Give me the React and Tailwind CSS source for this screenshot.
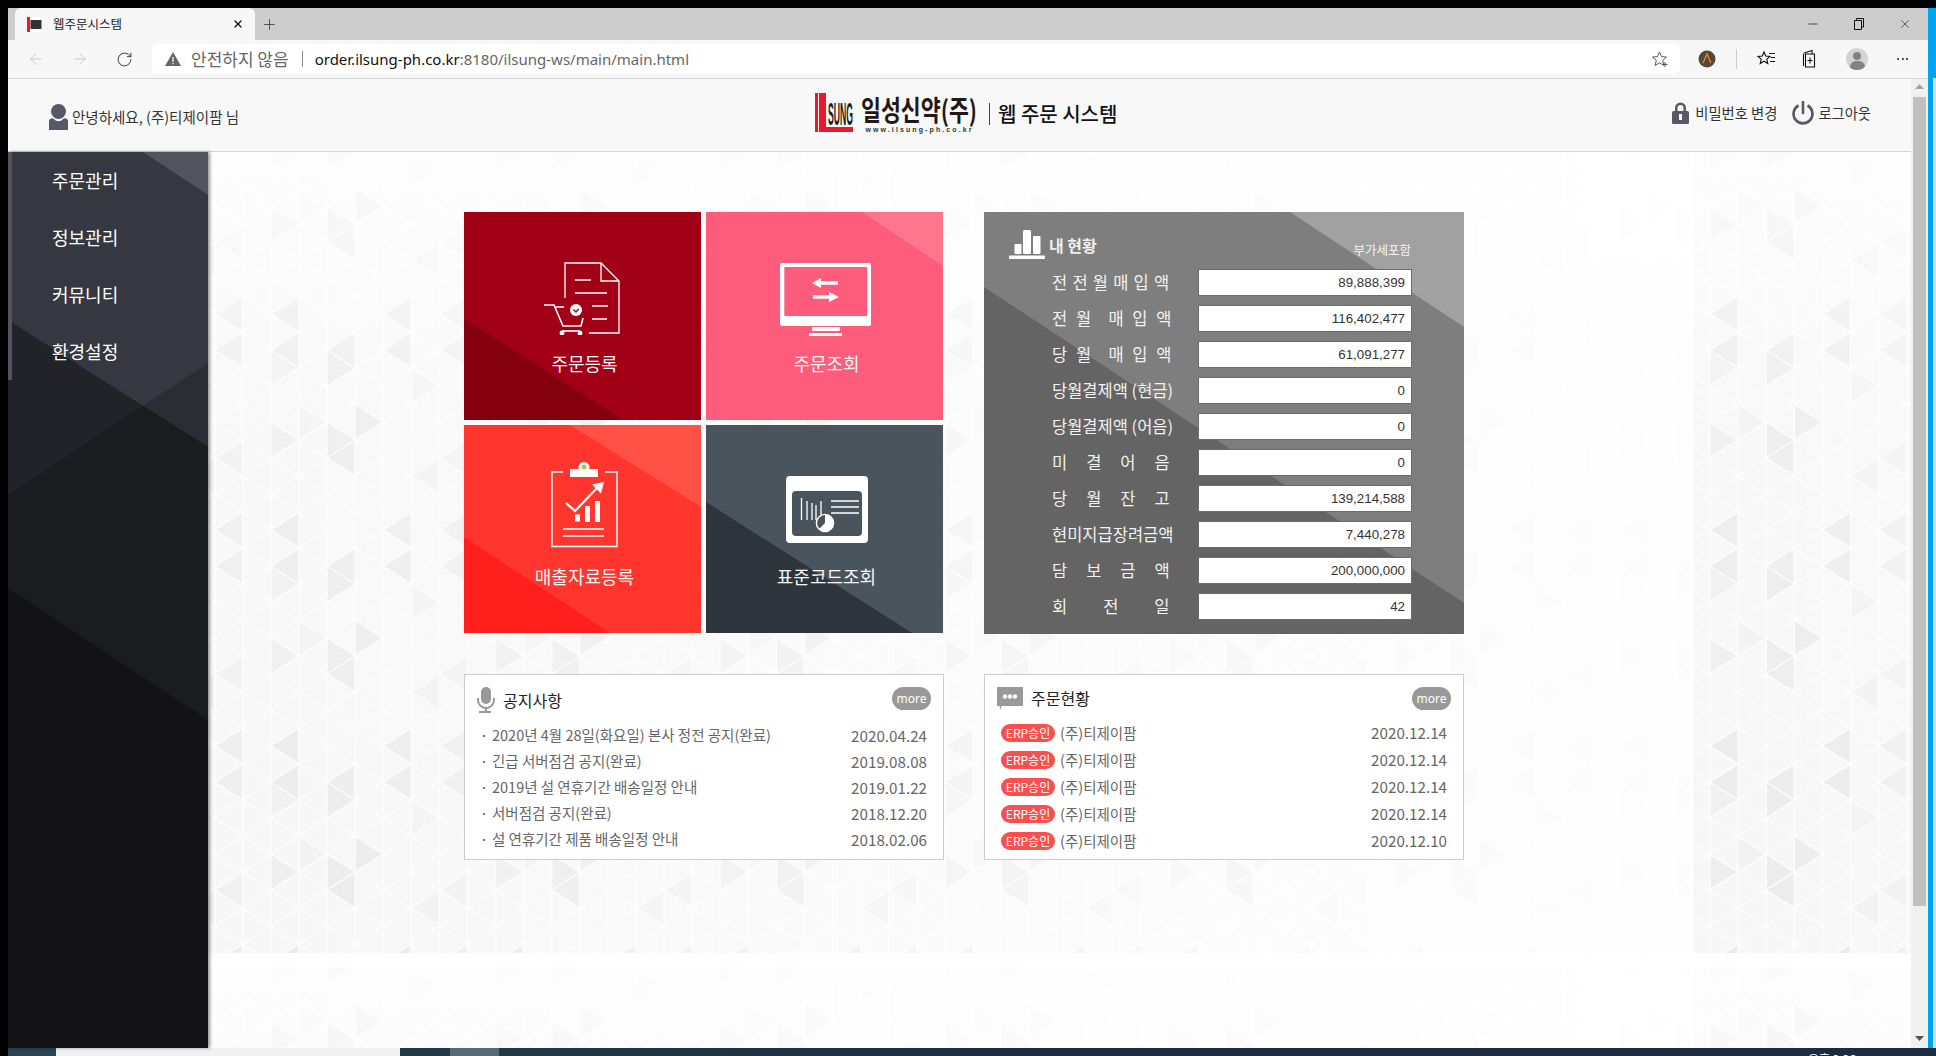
import React from "react";
import { ArrowLeft, ArrowRight, RotateCw, Plus, X, Minus } from "lucide-react";

const KR = "font-['Noto_Sans_CJK_KR','Noto_Sans',sans-serif]";

const GRAY = [
  [1, 18, 0, 36, 1], [1, 54, 0, 72, 1], [2, 72, 3, 90, 1], [3, 54, 2, 72, 1],
  [5, 18, 4, 36, 1], [5, 54, 4, 72, 1], [3, 126, 4, 144, 1], [2, 144, 3, 162, 1],
  [3, 162, 2, 180, 1], [0, 144, 1, 162, 0.7], [7, 18, 6, 36, 0.7], [7, 54, 6, 72, 0.7],
  [0, 72, 1, 90, 0.6], [7, 162, 6, 180, 0.5], [5, 90, 6, 108, 0.4], [1, 126, 2, 144, 0.4], [6, 180, 5, 198, 0.5],
];
const C = 28.09;

function Lattice({ id, ox, oy }) {
  const lines = [];
  for (let k = 0; k <= 8; k++) {
    const x = k * C;
    lines.push(<line key={"v" + k} x1={x} x2={x} y1={0} y2={216} />);
    for (let n = -1; n <= 6; n++) {
      const y = 36 * n + (k % 2 ? 18 : 0);
      lines.push(<line key={`a${k}${n}`} x1={x} y1={y} x2={x + C} y2={y + 18} />);
      lines.push(<line key={`b${k}${n}`} x1={x} y1={y} x2={x + C} y2={y - 18} />);
    }
  }
  return (
    <pattern id={id} patternUnits="userSpaceOnUse" x={ox} y={oy} width={C * 8} height={216}>
      <rect width={C * 8} height={216} fill="#f2f2f3" />
      {GRAY.map(([c, y, t, ty, o], i) => (
        <polygon key={i} points={`${c * C},${y} ${c * C},${y + 36} ${t * C},${ty}`} fill="#dedede" opacity={o} />
      ))}
      <g stroke="#fdfdfe" strokeWidth="1.4">{lines}</g>
    </pattern>
  );
}

function Background() {
  const Tile = ({ p }) => (
    <>
      <rect width="1483" height="801" fill={`url(#${p})`} />
      <rect width="1483" height="801" fill="url(#hg)" />
      <rect width="1483" height="801" fill="url(#vg)" />
    </>
  );
  return (
    <svg className="absolute inset-0" width="1703" height="896">
      <defs>
        <Lattice id="p1" ox={62.8} oy={126} />
        <Lattice id="p2" ox={17} oy={126} />
        <linearGradient id="hg" gradientUnits="userSpaceOnUse" x1="0" x2="1483" y1="0" y2="0">
          <stop offset="0" stopColor="#fff" stopOpacity=".38" />
          <stop offset=".3" stopColor="#fff" stopOpacity=".55" />
          <stop offset=".85" stopColor="#fff" stopOpacity=".85" />
          <stop offset="1" stopColor="#fff" stopOpacity=".92" />
        </linearGradient>
        <linearGradient id="vg" gradientUnits="userSpaceOnUse" x1="0" x2="0" y1="0" y2="801">
          <stop offset="0" stopColor="#fff" stopOpacity=".75" />
          <stop offset=".3" stopColor="#fff" stopOpacity=".2" />
          <stop offset="1" stopColor="#fff" stopOpacity="0" />
        </linearGradient>
      </defs>
      <rect width="1703" height="896" fill="#fff" />
      <g><Tile p="p1" /></g>
      <g transform="translate(1485,0)"><Tile p="p2" /></g>
      <g transform="translate(0,815)"><Tile p="p1" /></g>
      <g transform="translate(1485,815)"><Tile p="p2" /></g>
    </svg>
  );
}

const IconOrder = () => (
  <svg width="76" height="73" viewBox="0 0 76 73" fill="none" stroke="#fff" strokeWidth="1.3">
    <path d="M21 36V1H57L75 19V71H45" />
    <path d="M57 1V19H75" />
    <path d="M31 18H47M31 31H63M48 44H64M48 57H63" />
    <path d="M0 43H10L19 64H37L39 56M11 45H20" strokeWidth="1.6" />
    <path d="M18 69H36" strokeWidth="1.6" />
    <circle cx="18" cy="71" r="2.4" fill="#fff" stroke="none" />
    <circle cx="36" cy="71" r="2.4" fill="#fff" stroke="none" />
    <circle cx="32" cy="48" r="6" fill="#fff" stroke="none" />
    <path d="M29.5 47.5L32 50L34.8 47" stroke="#a20016" strokeWidth="1.5" />
  </svg>
);
const IconMonitor = () => (
  <svg width="91" height="73" viewBox="0 0 91 73">
    <rect width="91" height="63" rx="2" fill="#fff" />
    <rect x="4.3" y="4" width="83" height="49" rx="1" fill="#fd5c7a" />
    <rect x="32" y="64" width="28" height="4" rx="1" fill="#fff" />
    <rect x="29" y="70" width="33" height="3" fill="#fff" />
    <path d="M32 20L41 15V18.3H58V21.7H41V25Z M59 34L49 29V32.3H33V35.7H49V39Z" fill="#fff" />
  </svg>
);
const IconClip = () => (
  <svg width="68" height="86" viewBox="0 0 68 86" fill="none" stroke="#fff" strokeWidth="1.4">
    <path d="M12 10H1V84.5H66V10H54" />
    <rect x="19" y="7" width="28" height="8" fill="#fff" stroke="none" />
    <circle cx="33" cy="5.5" r="5.5" fill="#fff" stroke="none" />
    <circle cx="33" cy="5" r="2.5" fill="#a3c94c" stroke="none" />
    <path d="M15 41L24 49L47 25" strokeWidth="2.2" />
    <path d="M53 20L41 22.5L50 31.5Z" fill="#fff" stroke="none" />
    <path d="M24 52.5h5v7h-5zM34 44h5v16h-5zM44 39h5v21h-5z" fill="#fff" stroke="none" />
    <path d="M12 67H53M12 74H53" />
  </svg>
);
const IconCode = () => (
  <svg width="82" height="67" viewBox="0 0 82 67">
    <rect width="82" height="67" rx="4" fill="#fff" />
    <rect x="6" y="15" width="70" height="45" rx="4" fill="#4a545d" />
    <path d="M15.5 22V44M21 25V44M26 27V44M30 29V44M35 25V40M45 25H73M45 31H73M45 37H73" stroke="#fff" strokeWidth="1.3" />
    <circle cx="39" cy="47" r="8.6" fill="#4a545d" stroke="#fff" strokeWidth="1.4" />
    <path d="M39 47V38.5A8.5 8.5 0 0 1 39 55.5A8.5 8.5 0 0 1 33 53Z" fill="#fff" />
  </svg>
);

function Tile({ bg, layers, pad, icon, label }) {
  return (
    <div className={`relative h-[208px] overflow-hidden ${bg}`}>
      {layers}
      <div className="relative flex flex-col items-center">
        <div className={`h-[139px] ${pad}`}>{icon}</div>
        <div className={`h-6 text-[18px] leading-6 text-[#f6f6f6] pl-1 ${KR}`}>{label}</div>
      </div>
    </div>
  );
}

const ROWS = [
  ["전 전 월 매 입 액", "89,888,399", "[word-spacing:1.5px]"],
  ["전 월  매 입 액", "116,402,477", "[word-spacing:5px]"],
  ["당 월  매 입 액", "61,091,277", "[word-spacing:5px]"],
  ["당월결제액 (현금)", "0", ""],
  ["당월결제액 (어음)", "0", ""],
  ["미  결  어  음", "0", "[word-spacing:5.8px]"],
  ["당  월  잔  고", "139,214,588", "[word-spacing:5.8px]"],
  ["현미지급장려금액", "7,440,278", ""],
  ["담  보  금  액", "200,000,000", "[word-spacing:5.8px]"],
  ["회    전    일", "42", "[word-spacing:5.3px]"],
];
const NOTICES = [
  ["2020년 4월 28일(화요일) 본사 정전 공지(완료)", "2020.04.24"],
  ["긴급 서버점검 공지(완료)", "2019.08.08"],
  ["2019년 설 연휴기간 배송일정 안내", "2019.01.22"],
  ["서버점검 공지(완료)", "2018.12.20"],
  ["설 연휴기간 제품 배송일정 안내", "2018.02.06"],
];
const ORDERS = ["2020.12.14", "2020.12.14", "2020.12.14", "2020.12.14", "2020.12.10"];

const More = () => (
  <div className="mt-3 flex h-[23px] w-[39px] items-center justify-center rounded-full bg-[#999] font-['Noto_Sans',sans-serif] text-[12px] text-white">more</div>
);

function Chrome() {
  return (
    <>
      <div className="flex h-8 shrink-0 items-center bg-[#cdcdcd]">
        <div className="ml-[7px] flex h-8 w-[240px] items-center rounded-t-md bg-[#f7f7f7] pl-3 pr-2">
          <svg width="15" height="15" viewBox="0 0 15 15" className="shrink-0">
            <rect width="15" height="15" fill="#fff" />
            <rect x="0" y="0" width="3" height="15" fill="#e8192c" />
            <rect x="3.5" y="3" width="11" height="9" fill="#333" />
          </svg>
          <span className={`ml-[11px] flex-1 text-[12.5px] text-[#222] ${KR}`}>웹주문시스템</span>
          <X size={12} strokeWidth={2.5} className="mr-[3px] text-[#111]" />
        </div>
        <Plus size={17} strokeWidth={1} className="ml-[6px] text-[#222]" />
        <div className="flex-1" />
        <Minus size={14} strokeWidth={1.2} className="mr-[33px] text-[#111]" />
        <svg width="12" height="12" viewBox="0 0 12 12" fill="none" stroke="#111" className="mr-[33px]"><path d="M3.5 2.5V.5H10.5V9H8.5M1.5 2.5H8.5V11.5H1.5Z" /></svg>
        <X size={14} strokeWidth={1} className="mr-[16px] text-[#111]" />
      </div>
      <div className="flex h-[38px] shrink-0 items-center bg-[#f7f7f7]">
        <ArrowLeft size={18} strokeWidth={1} className="ml-[19px] text-[#bbb]" />
        <ArrowRight size={18} strokeWidth={1} className="ml-[26px] text-[#bbb]" />
        <RotateCw size={17} strokeWidth={1.2} className="ml-[27px] text-[#222]" />
        <div className="ml-[19px] flex h-[30px] w-[1528px] items-center rounded-md bg-white">
          <svg width="16" height="14" viewBox="0 0 16 14" className="ml-[13px]"><path d="M8 0L16 14H0Z" fill="#666" /><path d="M7.4 5h1.2v5H7.4zM7.4 11h1.2v1.2H7.4z" fill="#fff" /></svg>
          <span className={`ml-[10px] text-[17px] leading-6 text-[#666] ${KR}`}>안전하지 않음</span>
          <span className="ml-[13px] h-4 w-px bg-[#888]" />
          <span className={`ml-[12px] flex-1 text-[15px] text-[#666] font-['Noto_Sans',sans-serif]`}><span className="text-[#111]">order.ilsung-ph.co.kr</span>:8180/ilsung-ws/main/main.html</span>
          <svg width="18" height="18" viewBox="0 0 18 18" fill="none" stroke="#555" strokeWidth="1" className="mr-[11px]"><path d="M8.5 2l2 4.6 5 .5-3.8 3.3 1.1 5-4.3-2.6-4.3 2.6 1.1-5L1.5 7.100l5-.5Z" /><path d="M14 12v5M11.500 14.500h5" /></svg>
        </div>
        <svg width="18" height="18" viewBox="0 0 18 18" className="ml-[18px]"><circle cx="9" cy="9" r="8.500" fill="#51483f" /><path d="M5 13L9 4L13 13" fill="none" stroke="#f08a1d" strokeWidth="1.300" /></svg>
        <span className="ml-5 h-[20px] w-px bg-[#ccc]" />
        <svg width="20" height="18" viewBox="0 0 20 18" fill="none" stroke="#111" strokeWidth="1.100" className="ml-5"><path d="M7 2l1.700 4 4.300.4-3.200 2.800 1 4.300-3.800-2.300-3.800 2.300 1-4.300L1 6.400l4.300-.4Z" /><path d="M12 3.500h6M14 7.500h4M13 11.500h5" /></svg>
        <svg width="14" height="20" viewBox="0 0 14 20" fill="none" stroke="#111" strokeWidth="1.100" className="ml-[25px]"><path d="M2 4L10 1.500V5M1.500 4.500V17M3.500 5h9v13h-9zM8 8.500v6M5.500 11.500h5" /></svg>
        <div className="relative ml-[30px] h-[22px] w-[22px] overflow-hidden rounded-full bg-[#d4d4d4]">
          <div className="mx-auto mt-1 h-2 w-2 rounded-full bg-[#828282]" />
          <div className="mx-auto mt-[1px] h-3 w-[15px] rounded-full bg-[#828282]" />
        </div>
        <span className="ml-[29px] flex gap-[2.500px]">
          <i className="h-[2px] w-[2px] rounded-full bg-[#222]" /><i className="h-[2px] w-[2px] rounded-full bg-[#222]" /><i className="h-[2px] w-[2px] rounded-full bg-[#222]" />
        </span>
      </div>
      <div className="h-px shrink-0 bg-[#d8d8d8]" />
    </>
  );
}

function Header() {
  return (
    <div className="flex h-[73px] shrink-0 items-center border-b border-[#d6d6d6] bg-[#f8f8f8]">
      <div className="flex w-[807px] items-center pl-[41px]">
        <svg width="19" height="26" viewBox="0 0 19 26" className="mt-[3px]">
          <ellipse cx="9.500" cy="7.500" rx="7.500" ry="7.500" fill="#555a66" />
          <path d="M0 26V16C2 14 4 14 5 15C7 18 12 18 14 15C15 14 17 14 19 16V26Z" fill="#555a66" />
        </svg>
        <span className={`ml-[4px] mt-[3px] text-[14.500px] leading-5 text-[#333] ${KR}`}>안녕하세요, (주)티제이팜 님</span>
      </div>
      <div className="flex w-[327px] items-start">
        <svg width="46" height="40" viewBox="0 0 46 40" className="mt-[-2px] shrink-0">
          <rect x="0" y="0" width="3" height="39" fill="#e8192c" />
          <rect x="4" y="0" width="7" height="39" fill="#e8192c" />
          <rect x="4" y="34" width="34" height="5" fill="#e8192c" />
          <text x="13" y="32" fontFamily="'Liberation Sans',sans-serif" fontWeight="700" fontSize="32" textLength="25" lengthAdjust="spacingAndGlyphs" fill="#231815">SUNG</text>
        </svg>
        <div className="flex h-[40px] w-[117px] flex-col items-center">
          <svg width="117" height="29" viewBox="0 0 117 29" className="overflow-visible"><text x="0" y="26" fontFamily="'Noto Sans CJK KR',sans-serif" fontWeight="700" fontSize="28" textLength="116" lengthAdjust="spacingAndGlyphs" fill="#231815">일성신약(주)</text></svg>
          <span className="mt-[2px] font-['Liberation_Sans',sans-serif] text-[7px] font-bold leading-[8px] tracking-[2.100px] text-[#333]">www.ilsung-ph.co.kr</span>
        </div>
        <span className="ml-[11px] mt-[8px] h-[22px] w-px bg-[#444]" />
        <span className={`ml-[8px] mt-[3px] text-[20px] font-medium leading-[32px] whitespace-nowrap text-[#111] ${KR}`}>웹 주문 시스템</span>
      </div>
      <div className="flex-1" />
      <svg width="17" height="22" viewBox="0 0 17 22" className="-mt-1"><path d="M3 9V6a5.500 5.500 0 0 1 11 0v3h-2.500V6a3 3 0 0 0-6 0v3Z" fill="#555a66" /><rect y="9" width="17" height="13" rx="1.500" fill="#555a66" /><rect x="7" y="12" width="3" height="6" fill="#f8f8f8" /></svg>
      <span className={`ml-[6px] -mt-1 text-[14.300px] leading-5 text-[#333] ${KR}`}>비밀번호 변경</span>
      <svg width="24" height="24" viewBox="0 0 24 24" fill="none" stroke="#555a66" strokeWidth="2.600" className="ml-[14px] -mt-1"><path d="M7.500 4.500A9.500 9.500 0 1 0 16.500 4.500" /><path d="M12 1V12" strokeLinecap="round" /></svg>
      <span className={`ml-[3px] -mt-1 mr-[40px] text-[14.300px] leading-5 text-[#333] ${KR}`}>로그아웃</span>
    </div>
  );
}

function Sidebar() {
  return (
    <div className="relative z-10 w-[200px] shrink-0 overflow-hidden bg-[#363841] shadow-[2px_0_3px_rgba(0,0,0,.4)]">
      <div className="absolute inset-0 bg-[#51545f] [clip-path:polygon(135px_0,200px_0,200px_43px)]" />
      <div className="absolute inset-0 bg-[#2b2d35] [clip-path:polygon(0_343px,200px_211px,200px_100%,0_100%)]" />
      <div className="absolute inset-0 bg-[#222328] [clip-path:polygon(0_168px,200px_295px,200px_100%,0_100%)]" />
      <div className="absolute inset-0 bg-[#1b1c20] [clip-path:polygon(0_343px,135px_254px,200px_295px,200px_100%,0_100%)]" />
      <div className="absolute inset-0 bg-[#121217] [clip-path:polygon(0_436px,200px_568px,200px_100%,0_100%)]" />
      <ul className={`relative border-l-4 border-[#51545f] pl-10 text-[18px] text-white ${KR}`}>
        {["주문관리", "정보관리", "커뮤니티", "환경설정"].map((t) => (
          <li key={t} className="h-[57px] leading-[57px]">{t}</li>
        ))}
      </ul>
    </div>
  );
}

function Panel() {
  return (
    <div className="relative h-[422px] w-[480px] overflow-hidden bg-[#7e7e7e]">
      <div className="absolute inset-0 bg-[#a1a1a1] [clip-path:polygon(306px_0,480px_0,480px_115px)]" />
      <div className="absolute inset-0 bg-[#646464] [clip-path:polygon(0_75px,480px_391px,480px_100%,0_100%)]" />
      <div className="relative flex h-[57px] items-start">
        <svg width="36" height="30" viewBox="0 0 36 30" fill="#fff" className="ml-[25px] mt-[17px] shrink-0">
          <rect x="5.500" y="15" width="7" height="10" rx="1" /><rect x="14" y="1" width="8" height="24" rx="1.500" /><rect x="24" y="7" width="7.500" height="18" rx="1" /><rect y="26.500" width="36" height="3.500" rx="1" />
        </svg>
        <span className={`ml-[4px] mt-[21px] text-[16px] font-bold leading-6 text-[#f0f0f0] ${KR}`}>내 현황</span>
        <div className="flex-1" />
        <span className={`mr-[53px] mt-[30px] text-[12.500px] leading-4 text-[#f4f4f4] ${KR}`}>부가세포함</span>
      </div>
      <div className="relative flex flex-col gap-[9px] pl-[68px]">
        {ROWS.map(([l, v, ws]) => (
          <div key={l} className="flex h-[27px] items-center">
            <span className={`-mt-[2px] w-[146px] whitespace-pre text-[16.500px] leading-6 text-[#f2f2f2] ${KR} ${ws}`}>{l}</span>
            <div className="flex h-[27px] w-[214px] items-center justify-end border border-[#6c6c6c] bg-white pr-[6px] font-['Liberation_Sans',sans-serif] text-[13.333px] text-[#333]">{v}</div>
          </div>
        ))}
      </div>
    </div>
  );
}

function NoticeBox() {
  return (
    <div className="h-[186px] w-[480px] border border-[#ccc] bg-white">
      <div className="flex h-[47px] items-start justify-between pl-3 pr-[12px]">
        <div className="flex items-center pt-3">
          <svg width="18" height="26" viewBox="0 0 18 26" fill="#999"><rect x="4" y="0" width="10" height="17" rx="5" /><path d="M0 11h2v2a7 7 0 0 0 14 0v-2h2v2a9 9 0 0 1-8 8.900V24h4v2H2v-2h6v-2.100A9 9 0 0 1 0 13Z" /></svg>
          <span className={`ml-2 text-[16px] text-[#222] ${KR}`}>공지사항</span>
        </div>
        <More />
      </div>
      {NOTICES.map(([t, d]) => (
        <div key={d} className={`flex h-[26px] items-center pl-[15px] pr-4 text-[14.500px] text-[#666] ${KR}`}>
          <span className="w-[12px] text-[#555]">·</span>
          <span className="flex-1">{t}</span>
          <span className="text-[15.200px]">{d}</span>
        </div>
      ))}
    </div>
  );
}

function OrderBox() {
  return (
    <div className="h-[186px] w-[480px] border border-[#ccc] bg-white">
      <div className="flex h-[44px] items-start justify-between pl-3 pr-[12px]">
        <div className="flex items-center pt-3">
          <svg width="26" height="24" viewBox="0 0 26 24"><path d="M0 0H26V19H4.500L3.500 23L2.500 19H0Z" fill="#999" /><circle cx="8" cy="9.500" r="2.200" fill="#fff" /><circle cx="13" cy="9.500" r="2.200" fill="#fff" /><circle cx="18" cy="9.500" r="2.200" fill="#fff" /></svg>
          <span className={`-mt-[2px] ml-2 text-[16px] text-[#222] ${KR}`}>주문현황</span>
        </div>
        <More />
      </div>
      {ORDERS.map((d, i) => (
        <div key={i} className={`flex h-[27px] items-center pl-4 pr-4 text-[14.500px] text-[#666] ${KR}`}>
          <span className="flex h-[18px] w-[54px] items-center justify-center rounded-full bg-[#fb4f4f] text-[12px] text-white">ERP승인</span>
          <span className="ml-[5px] flex-1">(주)티제이팜</span>
          <span className="text-[15.200px]">{d}</span>
        </div>
      ))}
    </div>
  );
}

function Main() {
  return (
    <div className="relative min-w-0 flex-1 overflow-hidden">
      <Background />
      <div className="relative flex w-[1300px] flex-col gap-10 pl-[256px] pt-[60px]">
        <div className="flex gap-10">
          <div className="grid h-[422px] w-[480px] grid-cols-[237px_237px] grid-rows-[208px_208px] gap-[5px]">
            <Tile bg="bg-[#a20016]" pad="pt-[50px] pr-[2px]" icon={<IconOrder />} label="주문등록"
              layers={<div className="absolute inset-0 bg-[#85000f] [clip-path:polygon(0_106px,159px_100%,0_100%)]" />} />
            <Tile bg="bg-[#fd5c7a]" pad="pt-[51px] pl-[2px]" icon={<IconMonitor />} label="주문조회"
              layers={<div className="absolute inset-0 bg-[#fd768e] [clip-path:polygon(156px_0,100%_0,100%_54px)]" />} />
            <Tile bg="bg-[#ff352e]" pad="pt-[37px] pl-[4px]" icon={<IconClip />} label="매출자료등록"
              layers={<><div className="absolute inset-0 bg-[#ff5145] [clip-path:polygon(106px_0,100%_0,100%_82px)]" /><div className="absolute inset-0 bg-[#ff201e] [clip-path:polygon(0_112px,146px_100%,0_100%)]" /></>} />
            <Tile bg="bg-[#4a545d]" pad="pt-[51px] pl-[4px]" icon={<IconCode />} label="표준코드조회"
              layers={<div className="absolute inset-0 bg-[#2d343c] [clip-path:polygon(0_77px,206px_100%,0_100%)]" />} />
          </div>
          <Panel />
        </div>
        <div className="flex gap-10">
          <NoticeBox />
          <OrderBox />
        </div>
      </div>
    </div>
  );
}

function Scrollbar() {
  return (
    <div className="flex w-[17px] shrink-0 flex-col items-center bg-[#f0f0f0]">
      <svg width="9" height="5" className="mt-[5px] shrink-0"><path d="M4.500 0L9 5H0Z" fill="#a3a3a3" /></svg>
      <div className="mt-[8px] h-[809px] w-[13px] bg-[#c0c0c0]" />
      <div className="flex-1" />
      <svg width="9" height="5" className="mb-[7px] shrink-0"><path d="M4.500 5L9 0H0Z" fill="#555" /></svg>
    </div>
  );
}

function Taskbar() {
  return (
    <div className={`flex h-2 shrink-0 overflow-hidden bg-[#1b2c40] ${KR}`}>
      <div className="w-2 bg-black" />
      <div className="w-12 bg-[#2a4650]" />
      <div className="w-[344px] bg-[#f0f0f0]" />
      <div className="w-[50px] bg-[#1f3a45]" />
      <div className="w-[49px] bg-[#566a72]" />
      <div className="w-[500px] bg-[linear-gradient(90deg,#1f3a45,#1b2c40)]" />
      <div className="flex-1" />
      <span className="mr-[80px] mt-[3px] text-[12px] leading-4 text-white">오후 2:26</span>
    </div>
  );
}

export default function App() {
  return (
    <div className="flex h-[1056px] w-[1936px] flex-col overflow-hidden bg-black">
      <div className="h-2 shrink-0 bg-black" />
      <div className="flex min-h-0 flex-1">
        <div className="w-2 shrink-0 bg-black" />
        <div className="flex min-w-0 flex-1 flex-col bg-white">
          <Chrome />
          <div className="flex min-h-0 flex-1">
            <div className="flex min-w-0 flex-1 flex-col">
              <Header />
              <div className="flex min-h-0 flex-1">
                <Sidebar />
                <Main />
              </div>
            </div>
            <Scrollbar />
          </div>
        </div>
        <div className="w-[5px] shrink-0 bg-[#00a4ef]" />
        <div className="flex w-[3px] shrink-0 flex-col bg-[#d9d9d9]">
          <div className="h-[70px] bg-[#00a4ef]" />
        </div>
      </div>
      <Taskbar />
    </div>
  );
}
